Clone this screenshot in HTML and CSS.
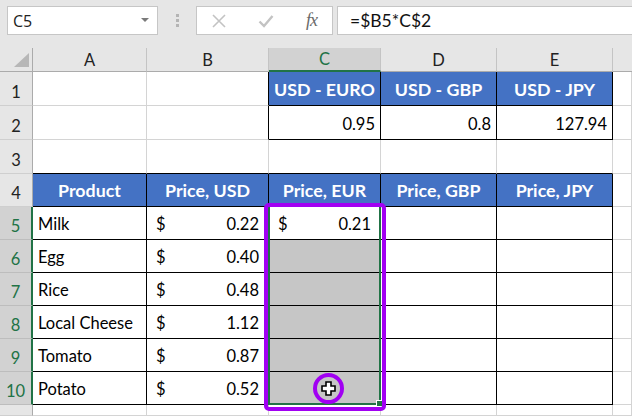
FILE: index.html
```html
<!DOCTYPE html>
<html>
<head>
<meta charset="utf-8">
<link rel="stylesheet" href="styles.css">
</head>
<body>
<div class="toolbar">
  <div class="namebox"><span class="nb-text">C5</span><span class="nb-arrow"></span></div>
  <div class="dots"><i></i><i></i><i></i></div>
  <div class="fbtns">
    <svg class="ic-x" width="14" height="14" viewBox="0 0 14 14"><path d="M1 1 L13 13 M13 1 L1 13" stroke="#c3c3c3" stroke-width="1.6" fill="none"/></svg>
    <svg class="ic-check" width="16" height="14" viewBox="0 0 16 14"><path d="M1.5 7.5 L6 12 L14.5 2" stroke="#c3c3c3" stroke-width="2.4" fill="none"/></svg>
    <span class="fx">fx</span>
  </div>
  <div class="finput">=$B5*C$2</div>
</div>

<div class="sheet">
  <div class="grid">
    <!-- header row -->
    <div class="ch corner"><svg width="15" height="14" viewBox="0 0 15 14"><polygon points="15,0 15,14 0,14" fill="#b7b7b7"/></svg></div>
    <div class="ch">A</div>
    <div class="ch">B</div>
    <div class="ch csel">C</div>
    <div class="ch">D</div>
    <div class="ch">E</div>
    <div class="ch last"></div>

    <!-- row 1 -->
    <div class="rh">1</div>
    <div class="c"></div>
    <div class="c br"></div>
    <div class="c blue bb brb">USD - EURO</div>
    <div class="c blue bb brb">USD - GBP</div>
    <div class="c blue bb brb">USD - JPY</div>
    <div class="c"></div>

    <!-- row 2 -->
    <div class="rh">2</div>
    <div class="c"></div>
    <div class="c br"></div>
    <div class="c num bb brb">0.95</div>
    <div class="c num bb brb">0.8</div>
    <div class="c num bb brb">127.94</div>
    <div class="c"></div>

    <!-- row 3 -->
    <div class="rh">3</div>
    <div class="c bb"></div>
    <div class="c bb"></div>
    <div class="c bb"></div>
    <div class="c bb"></div>
    <div class="c bb"></div>
    <div class="c"></div>

    <!-- row 4 -->
    <div class="rh">4</div>
    <div class="c blue bb brb">Product</div>
    <div class="c blue bb brb">Price, USD</div>
    <div class="c blue bb brb">Price, EUR</div>
    <div class="c blue bb brb">Price, GBP</div>
    <div class="c blue bb brb">Price, JPY</div>
    <div class="c"></div>

    <!-- row 5 -->
    <div class="rh rsel">5</div>
    <div class="c txt bb brb">Milk</div>
    <div class="c acc bb brb"><span>$</span><span>0.22</span></div>
    <div class="c acc bb brb"><span>$</span><span>0.21</span></div>
    <div class="c bb brb"></div>
    <div class="c bb brb"></div>
    <div class="c"></div>

    <!-- row 6 -->
    <div class="rh rsel">6</div>
    <div class="c txt bb brb">Egg</div>
    <div class="c acc bb brb"><span>$</span><span>0.40</span></div>
    <div class="c sel bb brb"></div>
    <div class="c bb brb"></div>
    <div class="c bb brb"></div>
    <div class="c"></div>

    <!-- row 7 -->
    <div class="rh rsel">7</div>
    <div class="c txt bb brb">Rice</div>
    <div class="c acc bb brb"><span>$</span><span>0.48</span></div>
    <div class="c sel bb brb"></div>
    <div class="c bb brb"></div>
    <div class="c bb brb"></div>
    <div class="c"></div>

    <!-- row 8 -->
    <div class="rh rsel">8</div>
    <div class="c txt bb brb">Local Cheese</div>
    <div class="c acc bb brb"><span>$</span><span>1.12</span></div>
    <div class="c sel bb brb"></div>
    <div class="c bb brb"></div>
    <div class="c bb brb"></div>
    <div class="c"></div>

    <!-- row 9 -->
    <div class="rh rsel">9</div>
    <div class="c txt bb brb">Tomato</div>
    <div class="c acc bb brb"><span>$</span><span>0.87</span></div>
    <div class="c sel bb brb"></div>
    <div class="c bb brb"></div>
    <div class="c bb brb"></div>
    <div class="c"></div>

    <!-- row 10 -->
    <div class="rh rsel">10</div>
    <div class="c txt bb brb">Potato</div>
    <div class="c acc bb brb"><span>$</span><span>0.52</span></div>
    <div class="c sel bb brb"></div>
    <div class="c bb brb"></div>
    <div class="c bb brb"></div>
    <div class="c"></div>

    <!-- row 11 (partial) -->
    <div class="rh"></div>
    <div class="c"></div>
    <div class="c"></div>
    <div class="c"></div>
    <div class="c"></div>
    <div class="c"></div>
    <div class="c"></div>
  </div>

  <div class="selbox"></div>
  <div class="handle"></div>
  <div class="annot"></div>
  <div class="cursor-ring">
    <svg width="15" height="15" viewBox="0 0 15 15"><polygon points="5,1 10,1 10,5 14,5 14,10 10,10 10,14 5,14 5,10 1,10 1,5 5,5" fill="#fff" stroke="#000" stroke-width="1.6" stroke-linejoin="miter"/></svg>
  </div>
</div>
</body>
</html>
```

FILE: styles.css
```css
html, body {
  margin: 0;
  padding: 0;
}
body {
  width: 632px;
  height: 416px;
  overflow: hidden;
  background: #ffffff;
  font-family: "Lato", "Liberation Sans", sans-serif;
  color: #000;
}

/* ---------- toolbar ---------- */
.toolbar {
  height: 48px;
  box-sizing: border-box;
  background: #e6e6e6;
  display: flex;
  align-items: flex-start;
  padding: 6px 0 0 7px;
}
.namebox {
  width: 151px;
  height: 29px;
  box-sizing: border-box;
  background: #fff;
  border: 1px solid #c6c6c6;
  display: flex;
  align-items: center;
  justify-content: space-between;
  padding: 0 8px 0 5px;
  font-family: "Open Sans", "Noto Sans", sans-serif;
  font-size: 16px;
  color: #222;
}
.nb-arrow {
  width: 0;
  height: 0;
  border-left: 4px solid transparent;
  border-right: 4px solid transparent;
  border-top: 4px solid #7a7a7a;
  margin-top: -2px;
}
.dots {
  margin-left: 18px;
  margin-top: 8px;
  display: flex;
  flex-direction: column;
  gap: 2px;
}
.dots i {
  display: block;
  width: 3px;
  height: 3px;
  background: #b4b4b4;
}
.fbtns {
  margin-left: 17px;
  width: 137px;
  height: 29px;
  box-sizing: border-box;
  background: #fff;
  border: 1px solid #c6c6c6;
  display: flex;
  align-items: center;
  padding-left: 15px;
}
.ic-check {
  margin-left: 32px;
}
.fx {
  margin-left: 32px;
  font-family: "Liberation Serif", serif;
  font-style: italic;
  font-size: 18px;
  color: #6a6a6a;
  letter-spacing: -1px;
}
.finput {
  margin-left: 4px;
  flex: 1;
  height: 29px;
  box-sizing: border-box;
  background: #fff;
  border: 1px solid #c6c6c6;
  border-right: none;
  display: flex;
  align-items: center;
  padding-left: 12px;
  font-size: 17.5px;
  color: #111;
}

/* ---------- sheet ---------- */
.sheet {
  position: relative;
}
.grid {
  display: grid;
  grid-template-columns: 33px 114px 122px 112px 116px 116px 19px;
  grid-template-rows: 24px 34px 34px 34px repeat(7, 33px) 11px;
  font-size: 16.5px;
}
.grid > div {
  box-sizing: border-box;
  border-right: 1px solid #d4d4d4;
  border-bottom: 1px solid #d4d4d4;
  display: flex;
  align-items: flex-end;
  padding-bottom: 5px;
  white-space: nowrap;
  overflow: hidden;
}

/* column headers */
.grid > .ch {
  background: #e6e6e6;
  border-right-color: #c4c4c4;
  border-bottom-color: #ababab;
  justify-content: center;
  align-items: center;
  padding-bottom: 0;
  color: #222;
}
.grid > .ch.corner {
  justify-content: flex-end;
  align-items: flex-end;
  padding: 0 3px 4px 0;
  border-right-color: #ababab;
}
.grid > .ch.csel {
  background: #d2d2d2;
  color: #217346;
  border-bottom: 2px solid #217346;
}
.grid > .ch.last {
  border-right: none;
}

/* row headers */
.grid > .rh {
  background: #e6e6e6;
  border-right-color: #ababab;
  border-bottom-color: #cfcfcf;
  justify-content: center;
  padding-bottom: 3px;
  color: #222;
}
.grid > .rh.rsel {
  background: #d2d2d2;
  color: #217346;
  border-right: 2px solid #217346;
  border-bottom-color: #bdbdbd;
}

/* cells */
.grid > .br { border-right-color: #000; }
.grid > .bb { border-bottom-color: #000; }
.grid > .brb { border-right-color: #000; }

.grid > .blue {
  background: #4472c4;
  color: #fff;
  font-weight: 700;
  font-size: 17.8px;
  justify-content: center;
  padding-bottom: 5px;
}
.grid > .num {
  justify-content: flex-end;
  padding-right: 5px;
}
.grid > .txt {
  padding-left: 5px;
}
.grid > .acc {
  justify-content: space-between;
  padding-left: 9px;
  padding-right: 9px;
}
.grid > .sel {
  background: #c6c6c6;
}

/* overlays */
.selbox {
  position: absolute;
  left: 268px;
  top: 157px;
  width: 113px;
  height: 200px;
  box-sizing: border-box;
  border: 2px solid #217346;
}
.handle {
  position: absolute;
  left: 376px;
  top: 352px;
  width: 7px;
  height: 7px;
  box-sizing: border-box;
  background: #217346;
  border: 1px solid #fff;
}
.annot {
  position: absolute;
  left: 264px;
  top: 155px;
  width: 122px;
  height: 208px;
  box-sizing: border-box;
  border: 4px solid #a100f2;
  border-radius: 5px;
}
.cursor-ring {
  position: absolute;
  left: 313px;
  top: 325px;
  width: 31px;
  height: 31px;
  box-sizing: border-box;
  border: 4px solid #a100f2;
  border-radius: 50%;
  display: flex;
  align-items: center;
  justify-content: center;
}
.cursor-ring svg {
  display: block;
}
```
